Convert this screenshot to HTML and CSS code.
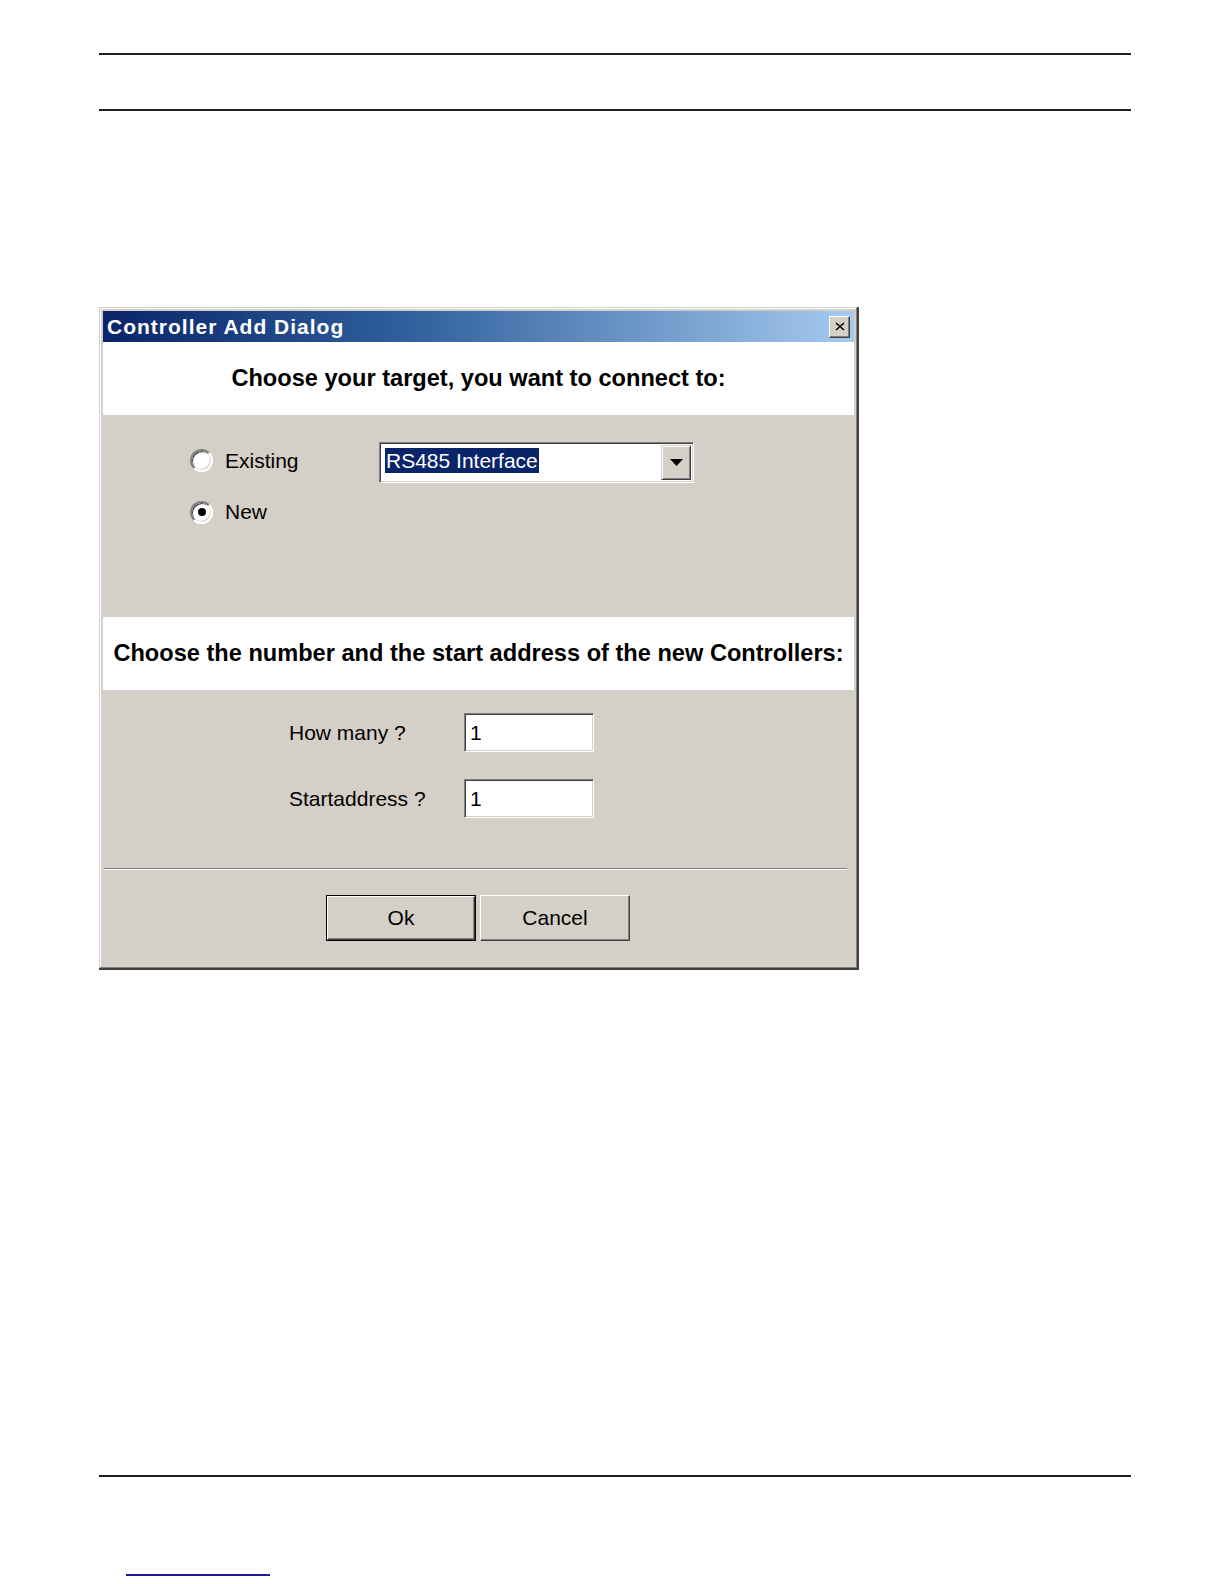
FILE: index.html
```html
<!DOCTYPE html>
<html>
<head>
<meta charset="utf-8">
<link rel="stylesheet" href="styles.css">
</head>
<body>
<div class="page">
  <div class="rule rule-top"></div>
  <div class="rule rule-second"></div>

  <div class="dialog">
    <div class="titlebar">
      <span class="title">Controller Add Dialog</span>
      <span class="close">
        <svg width="10" height="9" viewBox="0 0 10 9"><path d="M1 1 L9 8 M9 1 L1 8" stroke="#000" stroke-width="1.6"/></svg>
      </span>
    </div>
    <div class="client">
      <div class="panel-white panel-head1">Choose your target, you want to connect to:</div>
      <div class="panel-gray panel-target">
        <div class="opt-row opt-existing">
          <span class="radio"></span>
          <span class="opt-label">Existing</span>
          <div class="combo">
            <span class="combo-sel">RS485 Interface</span>
            <span class="combo-btn">
              <svg width="13" height="7" viewBox="0 0 13 7"><path d="M0 0 H13 L6.5 7 Z" fill="#000"/></svg>
            </span>
          </div>
        </div>
        <div class="opt-row opt-new">
          <span class="radio"><span class="dot"></span></span>
          <span class="opt-label">New</span>
        </div>
      </div>
      <div class="panel-white panel-head2">Choose the number and the start address of the new Controllers:</div>
      <div class="panel-gray panel-bottom">
        <div class="field-row field-first">
          <span class="field-label">How many ?</span>
          <span class="field-input">1</span>
        </div>
        <div class="field-row field-second">
          <span class="field-label">Startaddress ?</span>
          <span class="field-input">1</span>
        </div>
        <div class="separator"></div>
        <div class="buttons">
          <span class="btn btn-default"><span class="btn-inner">Ok</span></span>
          <span class="btn"><span class="btn-inner">Cancel</span></span>
        </div>
      </div>
    </div>
  </div>

  <div class="rule rule-footer"></div>
  <div class="link-line"></div>
</div>
</body>
</html>
```
FILE: styles.css
```css
html, body {
  margin: 0;
  padding: 0;
  background: #fff;
}
body {
  font-family: "Liberation Sans", Arial, sans-serif;
  color: #000;
}
.page {
  width: 1032px;
  padding-left: 99px;
  padding-top: 1px;
}
.rule {
  height: 2px;
  background: #1e1e1e;
  width: 1032px;
}
.rule-top { margin-top: 52px; }
.rule-second { margin-top: 54px; }

.dialog {
  margin-top: 196px;
  width: 760px;
  height: 663px;
  box-sizing: border-box;
  padding: 4px 5px 4px 4px;
  background: #d4d0c8;
  box-shadow: inset -2px -2px #404040, inset 1px 1px #d4d0c8, inset -3px -3px #808080, inset 2px 2px #fff;
  display: flex;
  flex-direction: column;
}
.titlebar {
  height: 31px;
  flex: none;
  background: linear-gradient(to right, #0a246a 0%, #2f5f9c 40%, #a6caf0 100%);
  display: flex;
  align-items: center;
  justify-content: space-between;
  padding: 0 4px 0 4px;
}
.title {
  color: #fff;
  font-weight: bold;
  font-size: 21px;
  letter-spacing: 1px;
  line-height: 30px;
}
.close {
  width: 21px;
  height: 22px;
  box-sizing: border-box;
  background: #d4d0c8;
  border: 1px solid;
  border-color: #fff #404040 #404040 #fff;
  box-shadow: inset -1px -1px #808080;
  display: flex;
  align-items: center;
  justify-content: center;
}
.client {
  flex: 1;
  display: flex;
  flex-direction: column;
}
.panel-white {
  background: #fff;
  display: flex;
  align-items: center;
  justify-content: center;
  font-weight: bold;
  font-size: 23.6px;
  white-space: nowrap;
}
.panel-head1 { height: 73px; }
.panel-head2 { height: 73px; }
.panel-gray {
  background: #d4d0c8;
}
.panel-target {
  height: 202px;
  box-sizing: border-box;
  padding: 27px 0 0 87px;
}
.opt-row {
  display: flex;
  align-items: center;
  font-size: 21px;
}
.opt-existing { height: 41px; }
.opt-existing .radio,
.opt-existing .opt-label { margin-bottom: 4px; }
.opt-new { height: 24px; margin-top: 17px; }
.radio {
  width: 23px;
  height: 23px;
  box-sizing: border-box;
  border-radius: 50%;
  background: #fff;
  border: 2px solid;
  border-color: #808080 #fff #fff #808080;
  box-shadow: inset 1px 1px #404040, inset -1px -1px #d4d0c8;
  display: flex;
  align-items: center;
  justify-content: center;
  flex: none;
}
.dot {
  width: 8px;
  height: 8px;
  border-radius: 50%;
  background: #000;
}
.opt-label {
  margin-left: 12px;
  width: 154px;
}
.combo {
  width: 315px;
  height: 41px;
  box-sizing: border-box;
  background: #fff;
  border: 1px solid;
  border-color: #808080 #fff #fff #808080;
  box-shadow: inset 1px 1px #404040, inset -1px -1px #d4d0c8;
  display: flex;
  align-items: center;
  justify-content: space-between;
  padding: 2px 2px 2px 5px;
}
.combo-sel {
  background: #0a246a;
  color: #fff;
  font-size: 21px;
  line-height: 25px;
  padding: 0 1px;
  align-self: flex-start;
  margin-top: 3px;
}
.combo-btn {
  width: 30px;
  height: 35px;
  box-sizing: border-box;
  background: #d4d0c8;
  border: 1px solid;
  border-color: #d4d0c8 #404040 #404040 #d4d0c8;
  box-shadow: inset 1px 1px #fff, inset -1px -1px #808080;
  display: flex;
  align-items: center;
  justify-content: center;
}
.panel-bottom {
  flex: 1;
  box-sizing: border-box;
  padding-top: 23px;
}
.field-row {
  display: flex;
  align-items: center;
  padding-left: 186px;
  font-size: 21px;
  height: 39px;
}
.field-second { margin-top: 27px; }
.field-label { width: 175px; }
.field-input {
  width: 130px;
  height: 39px;
  box-sizing: border-box;
  background: #fff;
  border: 1px solid;
  border-color: #808080 #fff #fff #808080;
  box-shadow: inset 1px 1px #404040, inset -1px -1px #d4d0c8;
  padding-left: 5px;
  line-height: 37px;
}
.separator {
  margin: 50px 7px 0 1px;
  height: 1px;
  background: #808080;
  border-bottom: 1px solid #fff;
}
.buttons {
  display: flex;
  gap: 4px;
  padding-left: 223px;
  margin-top: 25px;
}
.btn {
  width: 150px;
  height: 46px;
  box-sizing: border-box;
  border: 1px solid;
  border-color: #fff #404040 #404040 #fff;
  box-shadow: inset -1px -1px #808080, inset 1px 1px #d4d0c8;
  display: flex;
  font-size: 21px;
}
.btn-inner {
  flex: 1;
  display: flex;
  align-items: center;
  justify-content: center;
}
.btn-default {
  border: 1px solid #000;
  box-shadow: none;
}
.btn-default .btn-inner {
  border: 1px solid;
  border-color: #fff #404040 #404040 #fff;
  box-shadow: inset -1px -1px #808080;
}
.rule-footer { margin-top: 505px; }
.link-line {
  margin-top: 97px;
  margin-left: 27px;
  width: 144px;
  height: 2px;
  background: #1a1a9c;
}
```
